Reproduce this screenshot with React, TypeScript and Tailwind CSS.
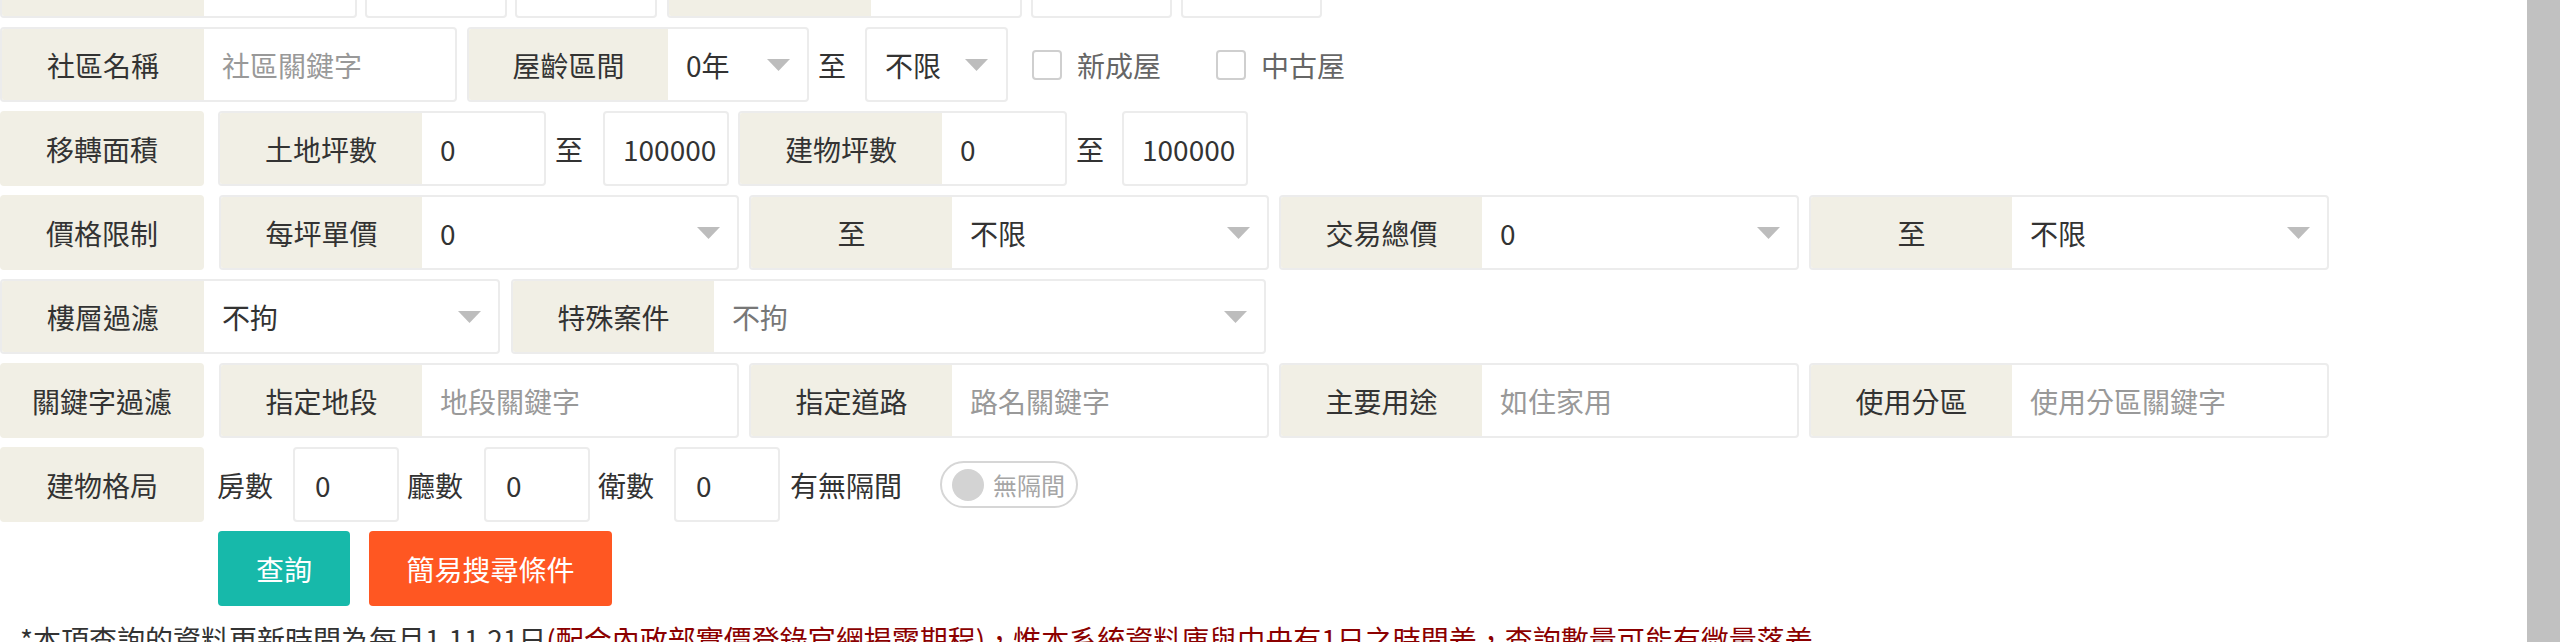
import React from "react";

const FONT = { fontFamily: '"Noto Sans CJK TC", "Noto Sans", sans-serif' };

function Arrow() {
  return (
    <svg width="23" height="12" viewBox="0 0 23 12" className="shrink-0">
      <polygon points="0,0 23,0 11.5,12" fill="#bdbdbd" />
    </svg>
  );
}

function SideLabel({ text }: { text: string }) {
  return (
    <div className="w-[204px] shrink-0 h-full bg-[#f1efe5] rounded-[4px] flex items-center justify-center text-[#333] text-[28px]">
      {text}
    </div>
  );
}

function Box({ w, children, className = "" }: { w: string; children?: React.ReactNode; className?: string }) {
  return (
    <div className={`${w} shrink-0 h-full border-2 border-[#ececec] rounded-[4px] bg-white flex items-center px-[18px] text-[28px] text-[#333] ${className}`}>
      {children}
    </div>
  );
}

function Group({
  w,
  labelW,
  label,
  children,
  className = "",
}: {
  w: string;
  labelW: string;
  label: string;
  children?: React.ReactNode;
  className?: string;
}) {
  return (
    <div className={`${w} shrink-0 h-full border-2 border-[#ececec] rounded-[4px] bg-white flex overflow-hidden ${className}`}>
      <div className={`${labelW} shrink-0 h-full bg-[#f1efe5] flex items-center justify-center text-[28px] text-[#333]`}>
        {label}
      </div>
      <div className="flex-1 h-full flex items-center pl-[18px] pr-[17px] text-[28px] text-[#333]">{children}</div>
    </div>
  );
}

function SelectVal({ v, gray = false }: { v: string; gray?: boolean }) {
  return (
    <div className="flex-1 flex items-center justify-between">
      <span className={gray ? "text-[#777]" : "text-[#333]"}>{v}</span>
      <Arrow />
    </div>
  );
}

function Ph({ t }: { t: string }) {
  return <span className="text-[#999]">{t}</span>;
}

function Checkbox({ label, className = "" }: { label: string; className?: string }) {
  return (
    <div className={`flex items-center ${className}`}>
      <div className="w-[30px] h-[30px] border-2 border-[#cfcfcf] rounded-[4px] bg-white" />
      <span className="ml-[15px] text-[28px] text-[#666]">{label}</span>
    </div>
  );
}

export default function App() {
  return (
    <div className="w-[2560px] h-[642px] overflow-hidden bg-white flex" style={FONT}>
      <div className="flex-1 h-full overflow-hidden">
        <div className="flex flex-col gap-[9px] mt-[-57px]">
          {/* Row 0 (partially visible) */}
          <div className="h-[75px] flex">
            <Group w="w-[357px]" labelW="w-[202px]" label="" />
            <Box w="w-[142px]" className="ml-[8px]" />
            <Box w="w-[142px]" className="ml-[8px]" />
            <Group w="w-[355px]" labelW="w-[202px]" label="" className="ml-[10px]" />
            <Box w="w-[141px]" className="ml-[9px]" />
            <Box w="w-[141px]" className="ml-[9px]" />
          </div>

          {/* Row 1 */}
          <div className="h-[75px] flex items-center">
            <Group w="w-[457px]" labelW="w-[202px]" label="社區名稱">
              <Ph t="社區關鍵字" />
            </Group>
            <Group w="w-[342px]" labelW="w-[199px]" label="屋齡區間" className="ml-[10px]">
              <SelectVal v="0年" />
            </Group>
            <span className="ml-[9px] text-[28px] text-[#333]">至</span>
            <Box w="w-[143px]" className="ml-[19px]">
              <SelectVal v="不限" />
            </Box>
            <Checkbox label="新成屋" className="ml-[24px]" />
            <Checkbox label="中古屋" className="ml-[55px]" />
          </div>

          {/* Row 2 */}
          <div className="h-[75px] flex items-center">
            <SideLabel text="移轉面積" />
            <Group w="w-[328px]" labelW="w-[202px]" label="土地坪數" className="ml-[14px]">
              0
            </Group>
            <span className="ml-[9px] text-[28px] text-[#333]">至</span>
            <Box w="w-[126px]" className="ml-[20px]">100000</Box>
            <Group w="w-[329px]" labelW="w-[202px]" label="建物坪數" className="ml-[9px]">
              0
            </Group>
            <span className="ml-[9px] text-[28px] text-[#333]">至</span>
            <Box w="w-[126px]" className="ml-[18px]">100000</Box>
          </div>

          {/* Row 3 */}
          <div className="h-[75px] flex items-center">
            <SideLabel text="價格限制" />
            <div className="ml-[15px] h-full flex gap-[10px]">
              <Group w="w-[520px]" labelW="w-[201px]" label="每坪單價">
                <SelectVal v="0" />
              </Group>
              <Group w="w-[520px]" labelW="w-[201px]" label="至">
                <SelectVal v="不限" />
              </Group>
              <Group w="w-[520px]" labelW="w-[201px]" label="交易總價">
                <SelectVal v="0" />
              </Group>
              <Group w="w-[520px]" labelW="w-[201px]" label="至">
                <SelectVal v="不限" />
              </Group>
            </div>
          </div>

          {/* Row 4 */}
          <div className="h-[75px] flex items-center">
            <Group w="w-[500px]" labelW="w-[202px]" label="樓層過濾">
              <SelectVal v="不拘" />
            </Group>
            <Group w="w-[755px]" labelW="w-[201px]" label="特殊案件" className="ml-[11px]">
              <SelectVal v="不拘" gray />
            </Group>
          </div>

          {/* Row 5 */}
          <div className="h-[75px] flex items-center">
            <SideLabel text="關鍵字過濾" />
            <div className="ml-[15px] h-full flex gap-[10px]">
              <Group w="w-[520px]" labelW="w-[201px]" label="指定地段">
                <Ph t="地段關鍵字" />
              </Group>
              <Group w="w-[520px]" labelW="w-[201px]" label="指定道路">
                <Ph t="路名關鍵字" />
              </Group>
              <Group w="w-[520px]" labelW="w-[201px]" label="主要用途">
                <Ph t="如住家用" />
              </Group>
              <Group w="w-[520px]" labelW="w-[201px]" label="使用分區">
                <Ph t="使用分區關鍵字" />
              </Group>
            </div>
          </div>

          {/* Row 6 */}
          <div className="h-[75px] flex items-center text-[28px] text-[#333]">
            <SideLabel text="建物格局" />
            <span className="ml-[13px]">房數</span>
            <Box w="w-[106px]" className="ml-[20px] px-[20px]">0</Box>
            <span className="ml-[8px]">廳數</span>
            <Box w="w-[106px]" className="ml-[21px] px-[20px]">0</Box>
            <span className="ml-[8px]">衛數</span>
            <Box w="w-[106px]" className="ml-[20px] px-[20px]">0</Box>
            <span className="ml-[10px]">有無隔間</span>
            <div className="ml-[38px] w-[138px] h-[47px] border-2 border-[#d6d6d6] rounded-full flex items-center pl-[10px]">
              <div className="w-[32px] h-[32px] rounded-full bg-[#d3d3d3]" />
              <span className="ml-[9px] text-[24px] text-[#a6a6a6]">無隔間</span>
            </div>
          </div>

          {/* Buttons */}
          <div className="h-[75px] flex ml-[218px]">
            <button className="w-[132px] h-full rounded-[4px] bg-[#17b9aa] text-white text-[28px]">查詢</button>
            <button className="ml-[19px] w-[243px] h-full rounded-[4px] bg-[#ff5722] text-white text-[28px]">
              簡易搜尋條件
            </button>
          </div>

          {/* Note */}
          <div className="mt-[4px] pl-[20px] text-[28px] leading-[40px] whitespace-nowrap text-[#333]">
            *本項查詢的資料更新時間為每月1,11,21日
            <span className="text-[#8b0000]">
              (配合內政部實價登錄官網揭露期程)，惟本系統資料庫與中央有1日之時間差，查詢數量可能有微量落差
            </span>
          </div>
        </div>
      </div>
      <div className="w-[33px] h-full bg-[#c1c1c1] shrink-0" />
    </div>
  );
}
